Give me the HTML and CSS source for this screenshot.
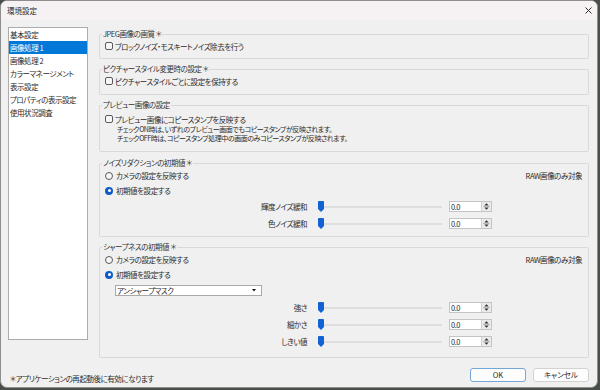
FILE: index.html
```html
<!DOCTYPE html>
<html lang="ja">
<head>
<meta charset="utf-8">
<title>環境設定</title>
<link rel="stylesheet" href="styles.css">
</head>
<body>
<div class="window">
  <div class="titlebar">
    <span class="title">環境設定</span>
    <svg class="close" width="7" height="7" viewBox="0 0 7 7"><path d="M0.5 0.5L6.5 6.5M6.5 0.5L0.5 6.5" stroke="#2b2b2b" stroke-width="1"/></svg>
  </div>
  <div class="main">
    <ul class="nav">
      <li>基本設定</li>
      <li class="sel">画像処理 1</li>
      <li>画像処理 2</li>
      <li>カラーマネージメント</li>
      <li>表示設定</li>
      <li>プロパティの表示設定</li>
      <li>使用状況調査</li>
    </ul>
    <div class="groups">
      <fieldset class="g g1">
        <legend>JPEG画像の画質 ＊</legend>
        <div class="row"><span class="cb"></span><span>ブロックノイズ・モスキートノイズ除去を行う</span></div>
      </fieldset>
      <fieldset class="g g2">
        <legend>ピクチャースタイル変更時の設定 ＊</legend>
        <div class="row"><span class="cb"></span><span>ピクチャースタイルごとに設定を保持する</span></div>
      </fieldset>
      <fieldset class="g g3">
        <legend>プレビュー画像の設定</legend>
        <div class="row"><span class="cb"></span><span>プレビュー画像にコピースタンプを反映する</span></div>
        <p class="desc"><span class="dline">チェックON時は、いずれのプレビュー画面でもコピースタンプが反映されます。</span><span class="dline">チェックOFF時は、コピースタンプ処理中の画面のみコピースタンプが反映されます。</span></p>
      </fieldset>
      <fieldset class="g g4">
        <legend>ノイズリダクションの初期値 ＊</legend>
        <div class="rrow"><span class="opt"><span class="rb"></span>カメラの設定を反映する</span><span>RAW画像のみ対象</span></div>
        <div class="rrow"><span class="opt"><span class="rb on"></span>初期値を設定する</span></div>
        <div class="srow first">
          <span class="slabel">輝度ノイズ緩和</span>
          <span class="slider"><svg class="thumb" width="6" height="11" viewBox="0 0 6 11"><path d="M1 0H5Q6 0 6 1V8L3 11L0 8V1Q0 0 1 0Z" fill="#1262d3"/></svg><span class="track"></span></span>
          <span class="spin"><span class="val">0.0</span><span class="btns"><svg width="9" height="9" viewBox="0 0 9 9"><path d="M4.5 1.2L6.7 3.6H2.3Z" fill="#333"/><path d="M1 4.5H8" stroke="#bdbdbd" stroke-width="1"/><path d="M2.3 5.4H6.7L4.5 7.8Z" fill="#333"/></svg></span></span>
        </div>
        <div class="srow">
          <span class="slabel">色ノイズ緩和</span>
          <span class="slider"><svg class="thumb" width="6" height="11" viewBox="0 0 6 11"><path d="M1 0H5Q6 0 6 1V8L3 11L0 8V1Q0 0 1 0Z" fill="#1262d3"/></svg><span class="track"></span></span>
          <span class="spin"><span class="val">0.0</span><span class="btns"><svg width="9" height="9" viewBox="0 0 9 9"><path d="M4.5 1.2L6.7 3.6H2.3Z" fill="#333"/><path d="M1 4.5H8" stroke="#bdbdbd" stroke-width="1"/><path d="M2.3 5.4H6.7L4.5 7.8Z" fill="#333"/></svg></span></span>
        </div>
      </fieldset>
      <fieldset class="g g5">
        <legend>シャープネスの初期値 ＊</legend>
        <div class="rrow"><span class="opt"><span class="rb"></span>カメラの設定を反映する</span><span>RAW画像のみ対象</span></div>
        <div class="rrow"><span class="opt"><span class="rb on"></span>初期値を設定する</span></div>
        <div class="select"><span>アンシャープマスク</span><svg width="4" height="3" viewBox="0 0 4 3"><path d="M0 0H4L2 2.5Z" fill="#111"/></svg></div>
        <div class="srow">
          <span class="slabel">強さ</span>
          <span class="slider"><svg class="thumb" width="6" height="11" viewBox="0 0 6 11"><path d="M1 0H5Q6 0 6 1V8L3 11L0 8V1Q0 0 1 0Z" fill="#1262d3"/></svg><span class="track"></span></span>
          <span class="spin"><span class="val">0.0</span><span class="btns"><svg width="9" height="9" viewBox="0 0 9 9"><path d="M4.5 1.2L6.7 3.6H2.3Z" fill="#333"/><path d="M1 4.5H8" stroke="#bdbdbd" stroke-width="1"/><path d="M2.3 5.4H6.7L4.5 7.8Z" fill="#333"/></svg></span></span>
        </div>
        <div class="srow">
          <span class="slabel">細かさ</span>
          <span class="slider"><svg class="thumb" width="6" height="11" viewBox="0 0 6 11"><path d="M1 0H5Q6 0 6 1V8L3 11L0 8V1Q0 0 1 0Z" fill="#1262d3"/></svg><span class="track"></span></span>
          <span class="spin"><span class="val">0.0</span><span class="btns"><svg width="9" height="9" viewBox="0 0 9 9"><path d="M4.5 1.2L6.7 3.6H2.3Z" fill="#333"/><path d="M1 4.5H8" stroke="#bdbdbd" stroke-width="1"/><path d="M2.3 5.4H6.7L4.5 7.8Z" fill="#333"/></svg></span></span>
        </div>
        <div class="srow">
          <span class="slabel">しきい値</span>
          <span class="slider"><svg class="thumb" width="6" height="11" viewBox="0 0 6 11"><path d="M1 0H5Q6 0 6 1V8L3 11L0 8V1Q0 0 1 0Z" fill="#1262d3"/></svg><span class="track"></span></span>
          <span class="spin"><span class="val">0.0</span><span class="btns"><svg width="9" height="9" viewBox="0 0 9 9"><path d="M4.5 1.2L6.7 3.6H2.3Z" fill="#333"/><path d="M1 4.5H8" stroke="#bdbdbd" stroke-width="1"/><path d="M2.3 5.4H6.7L4.5 7.8Z" fill="#333"/></svg></span></span>
        </div>
      </fieldset>
    </div>
  </div>
  <div class="footer">
    <span class="note">＊アプリケーションの再起動後に有効になります</span>
    <div class="buttons">
      <button class="btn default">OK</button>
      <button class="btn">キャンセル</button>
    </div>
  </div>
</div>
</body>
</html>
```
FILE: styles.css
```css
* { box-sizing: border-box; }
html, body { margin: 0; padding: 0; }
body {
  width: 600px;
  height: 390px;
  overflow: hidden;
  background: #4a4e4a;
  font-family: "Noto Sans CJK JP", "Noto Sans", sans-serif;
  font-size: 7.5px;
  letter-spacing: -0.45px;
  color: #2a2a2a;
  font-feature-settings: "palt";
}
.window {
  width: 598px;
  height: 388px;
  background: #f0f0f0;
  border: 1px solid #8e8e8e;
  border-radius: 7px;
  overflow: hidden;
  display: flex;
  flex-direction: column;
}
.titlebar {
  height: 19px;
  flex: none;
  display: flex;
  align-items: center;
  justify-content: space-between;
  padding: 0 5px 0 6px;
  background: #f6f2f3;
}
.title { font-size: 7.5px; line-height: 10px; letter-spacing: 0; }
.close { display: block; }
.main {
  display: flex;
  gap: 11px;
  padding: 7px 8px 0 7px;
}
.nav {
  width: 80px;
  height: 313px;
  flex: none;
  margin: 0;
  padding: 0;
  list-style: none;
  background: #fff;
  border: 1px solid #acacac;
}
.nav li {
  height: 13px;
  line-height: 13px;
  padding-left: 1px;
  white-space: nowrap;
}
.nav li.sel { background: #0078d7; color: #fff; }
.groups {
  flex: 1;
  min-width: 0;
  padding-top: 2px;
  display: flex;
  flex-direction: column;
}
.g {
  margin: 0;
  padding: 0 6px 6px 5px;
  border: 1px solid #d9d9d9;
  border-radius: 2px;
  min-width: 0;
}
.g legend {
  padding: 0 1px;
  margin-left: -3px;
  height: 10px;
  line-height: 10px;
  color: #333;
}
.g2 { margin-top: 5px; padding-bottom: 7px; }
.g3 { margin-top: 5px; padding-bottom: 8px; }
.g4 { margin-top: 6px; padding-bottom: 7px; }
.g5 { margin-top: 5px; padding-bottom: 10px; }
.row {
  display: flex;
  align-items: center;
  height: 12px;
  margin-top: 1px;
  white-space: nowrap;
}
.g3 .row { margin-top: 3px; }
.cb {
  width: 8px;
  height: 8px;
  flex: none;
  border: 1px solid #5a5a5a;
  border-radius: 2px;
  background: #f6f6f6;
  margin-right: 2px;
}
.desc {
  margin: 0;
  padding-left: 12px;
  display: flex;
  flex-direction: column;
  white-space: nowrap;
}
.dline {
  display: block;
  height: 9px;
  font-size: 7px;
  line-height: 9px;
}
.rrow {
  display: flex;
  align-items: center;
  justify-content: space-between;
  height: 15px;
  white-space: nowrap;
}
.opt { display: flex; align-items: center; }
.rb {
  width: 8px;
  height: 8px;
  flex: none;
  border: 1px solid #5a5a5a;
  border-radius: 50%;
  margin-right: 3px;
  background: #f6f6f6;
}
.rb.on {
  border: none;
  background: #0b5cc6;
  display: flex;
  align-items: center;
  justify-content: center;
}
.rb.on::after {
  content: "";
  width: 3px;
  height: 3px;
  border-radius: 50%;
  background: #fff;
}
.srow {
  display: flex;
  align-items: center;
  height: 11px;
  margin-top: 6px;
  white-space: nowrap;
}
.srow.first { margin-top: 3px; }
.slabel { width: 202px; flex: none; text-align: right; }
.slider {
  width: 124px;
  flex: none;
  margin-left: 11px;
  height: 11px;
  display: flex;
  align-items: center;
}
.thumb { display: block; flex: none; }
.track { flex: 1; height: 2px; background: #dedede; }
.spin {
  width: 43px;
  height: 11px;
  flex: none;
  margin-left: 7px;
  border: 1px solid #c4c4c4;
  background: #fff;
  display: flex;
}
.val { flex: 1; padding-left: 1px; line-height: 9px; }
.btns {
  width: 10px;
  flex: none;
  border-left: 1px solid #d0d0d0;
  background: #ebebeb;
  display: flex;
  align-items: center;
  justify-content: center;
}
.btns svg { display: block; }
.select {
  margin: 3px 0 0 10px;
  width: 147px;
  height: 11px;
  border: 1px solid #a9a9a9;
  background: #fff;
  display: flex;
  align-items: center;
  justify-content: space-between;
  padding: 0 5px 0 1px;
  line-height: 9px;
}
.select svg { display: block; }
.footer {
  display: flex;
  align-items: center;
  justify-content: space-between;
  padding: 8px 8px 0 9px;
}
.note { padding-top: 8px; line-height: 10px; }
.buttons { display: flex; gap: 7px; }
.btn {
  width: 56px;
  height: 14px;
  padding: 0;
  border: 1px solid #d2d2d2;
  border-radius: 3px;
  background: #fdfdfd;
  font: inherit;
  color: #2a2a2a;
  line-height: 12px;
  text-align: center;
}
.btn.default { border-color: #74a6da; }
```
